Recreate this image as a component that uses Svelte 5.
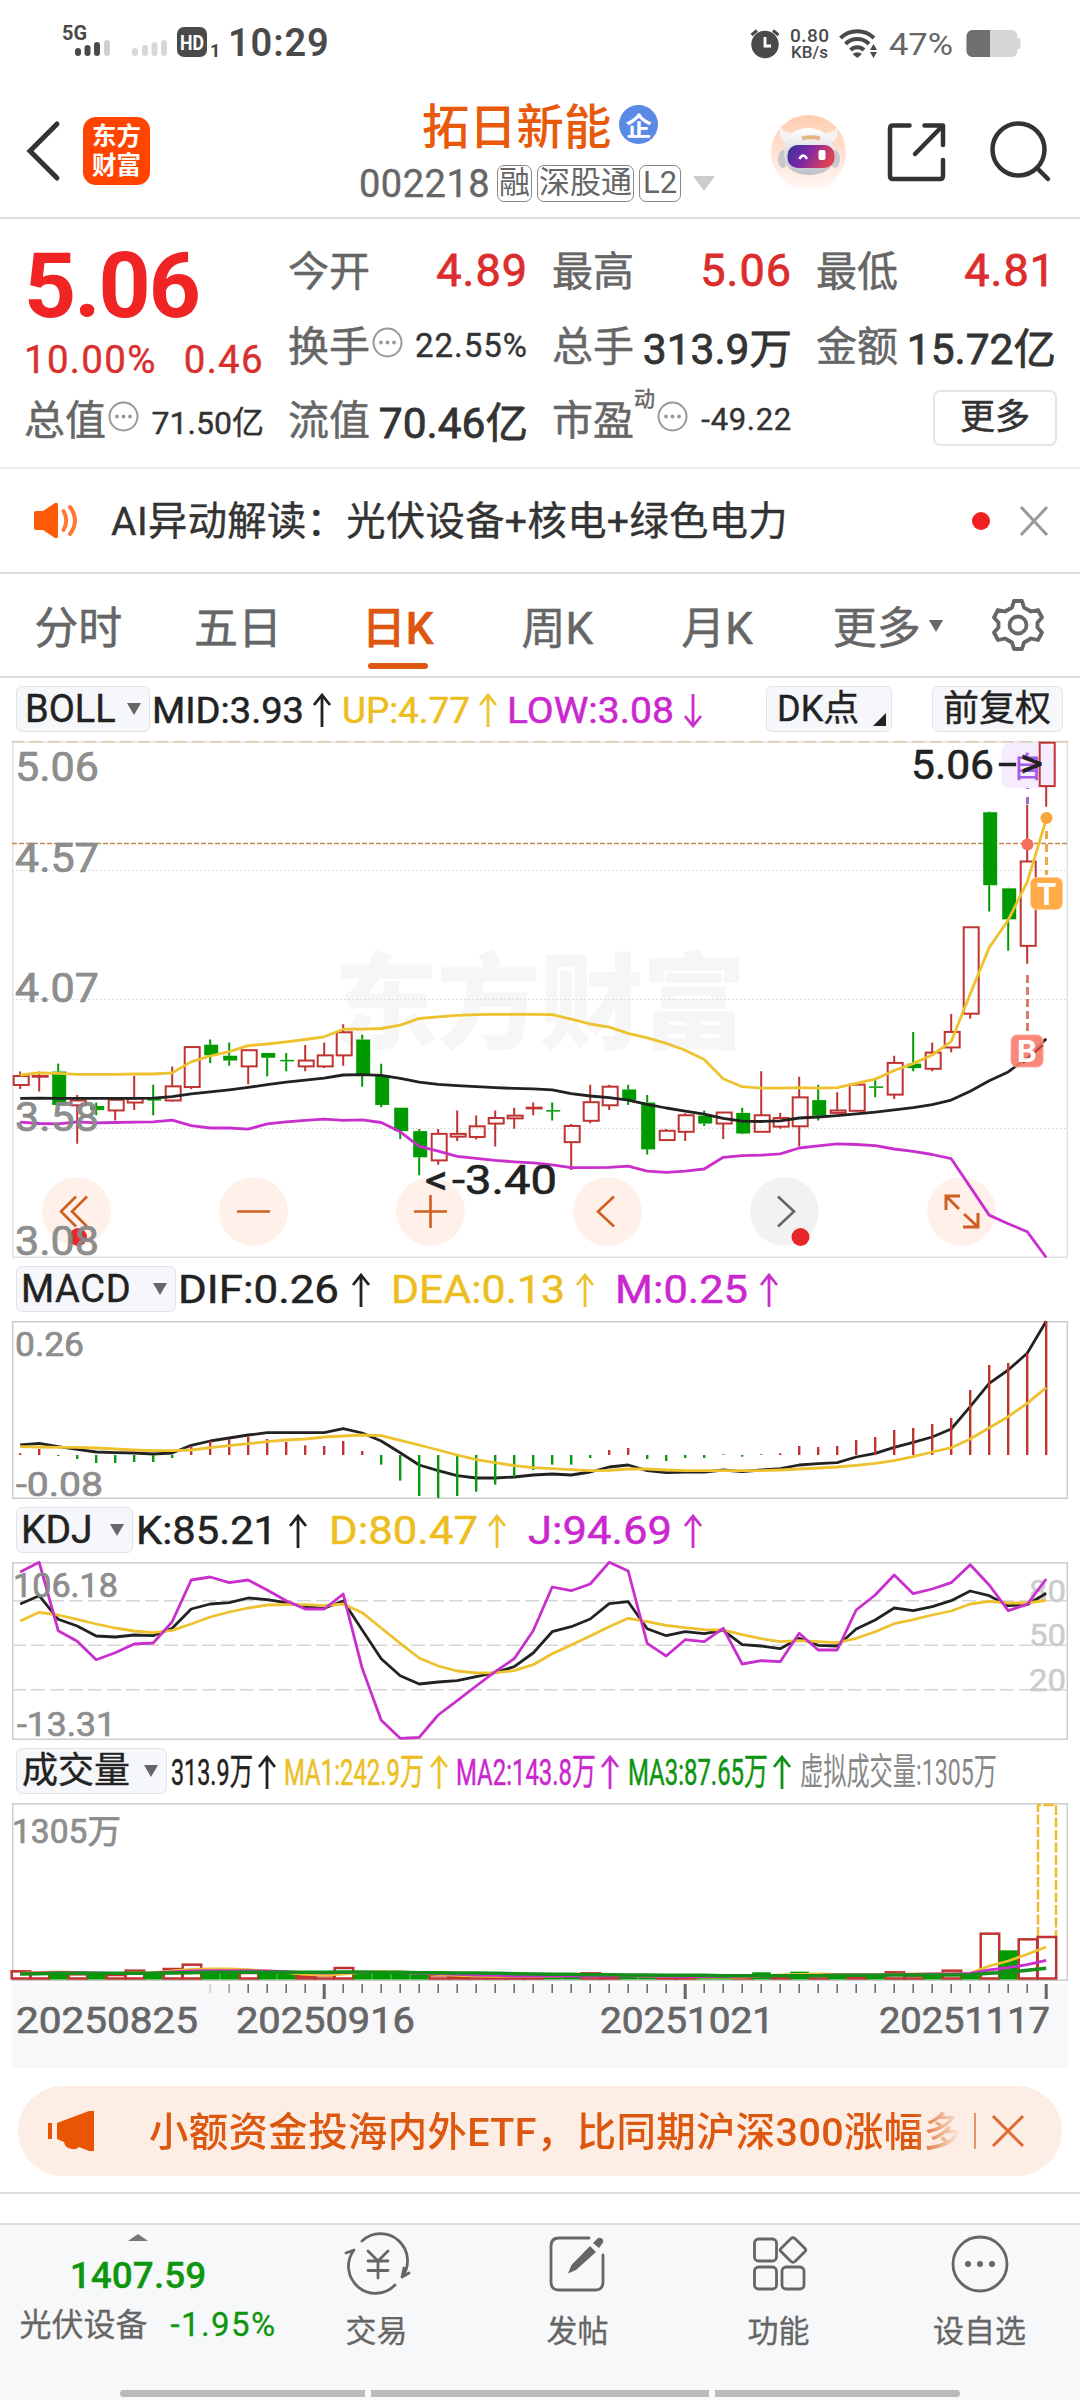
<script>
	const STEP = 19;
	const px = (i) => 8.2 + STEP * i;

	// candle: [body top, body bottom, high, low, rising]
	const candles = [
		[1003, 1029, 990, 1041, 1], [1003, 1005, 990, 1048, 1], [990, 1087, 967, 1087, 0], [1074, 1088, 1058, 1200, 1],
		[1090, 1102, 1080, 1117, 0], [1072, 1103, 1072, 1132, 1], [1068, 1080, 1002, 1102, 1], [1070, 1073, 1028, 1117, 0],
		[1033, 1074, 975, 1078, 1], [919, 1035, 919, 1041, 1], [912, 943, 897, 966, 0], [944, 958, 906, 973, 0],
		[928, 975, 928, 1027, 1], [936, 950, 936, 1004, 0], [956, 960, 936, 989, 0], [958, 975, 913, 989, 1],
		[943, 975, 906, 980, 1], [876, 943, 853, 973, 1], [897, 998, 883, 1034, 0], [1000, 1087, 967, 1094, 0],
		[1095, 1163, 1095, 1186, 0], [1163, 1239, 1157, 1291, 0], [1171, 1248, 1157, 1261, 1], [1171, 1179, 1103, 1192, 1],
		[1149, 1180, 1118, 1187, 1], [1125, 1141, 1103, 1208, 1], [1118, 1126, 1095, 1156, 1], [1095, 1097, 1080, 1117, 1],
		[1102, 1105, 1080, 1132, 0], [1148, 1195, 1142, 1276, 1], [1079, 1133, 1028, 1140, 1], [1034, 1088, 1028, 1102, 1],
		[1042, 1073, 1028, 1087, 0], [1080, 1216, 1058, 1231, 0], [1162, 1189, 1157, 1189, 1], [1117, 1165, 1111, 1192, 1],
		[1118, 1141, 1103, 1148, 0], [1109, 1141, 1109, 1186, 1], [1110, 1170, 1095, 1172, 0], [1117, 1165, 989, 1165, 1],
		[1125, 1150, 1110, 1156, 1], [1065, 1149, 1005, 1208, 1], [1073, 1118, 1028, 1132, 0], [1103, 1110, 1050, 1110, 1],
		[1028, 1104, 1028, 1104, 1], [1033, 1037, 1014, 1065, 0], [965, 1057, 944, 1070, 1], [967, 980, 875, 989, 0],
		[935, 982, 906, 989, 1], [875, 920, 823, 934, 1], [571, 822, 571, 836, 1], [237, 449, 235, 525, 0],
		[458, 548, 456, 639, 0], [380, 625, 215, 677, 1], [35, 161, 35, 221, 1]
	];
	const up = [1000, 994, 995, 998, 998, 998, 997, 997, 994, 962, 945, 932, 915, 910, 904, 897, 889, 867, 867, 865, 855, 836, 831, 827, 825, 824, 824, 824, 825, 838, 852, 861, 879, 892, 908, 928, 955, 1011, 1034, 1038, 1038, 1037, 1038, 1037, 1024, 1012, 987, 967, 942, 903, 765, 630, 550, 440, 258];
	const mid = [1068, 1067, 1068, 1068, 1068, 1068, 1068, 1067, 1063, 1055, 1049, 1043, 1036, 1028, 1021, 1015, 1009, 1000, 999, 1001, 1010, 1021, 1027, 1031, 1034, 1037, 1039, 1040, 1043, 1054, 1061, 1066, 1073, 1085, 1096, 1105, 1114, 1126, 1134, 1135, 1133, 1125, 1122, 1118, 1113, 1108, 1101, 1095, 1086, 1073, 1047, 1017, 991, 950, 895];
	const low = [1137, 1141, 1142, 1136, 1139, 1138, 1137, 1136, 1131, 1147, 1154, 1154, 1157, 1142, 1136, 1132, 1128, 1132, 1130, 1138, 1165, 1207, 1221, 1236, 1242, 1248, 1252, 1255, 1261, 1269, 1269, 1268, 1265, 1279, 1283, 1279, 1273, 1239, 1234, 1233, 1229, 1212, 1206, 1200, 1202, 1205, 1215, 1222, 1231, 1243, 1325, 1407, 1432, 1455, 1530];

	const macdBars = [580, 567, 588, 597, 609, 609, 606, 606, 594, 558, 543, 537, 530, 537, 546, 556, 558, 543, 573, 614, 662, 708, 714, 708, 695, 674, 651, 630, 614, 614, 594, 570, 564, 597, 603, 594, 594, 583, 590, 583, 580, 558, 561, 558, 540, 531, 510, 504, 492, 474, 390, 315, 309, 280, 184];
	const dif = [555, 550, 560, 568, 576, 578, 579, 582, 579, 556, 543, 534, 525, 518, 518, 518, 518, 506, 519, 543, 578, 615, 632, 647, 654, 654, 651, 645, 642, 645, 636, 621, 615, 632, 638, 636, 636, 630, 635, 630, 626, 615, 611, 608, 591, 580, 562, 547, 531, 507, 440, 370, 330, 280, 184];
	const dea = [560, 561, 562, 562, 564, 567, 570, 572, 572, 570, 563, 557, 551, 545, 540, 537, 531, 528, 525, 527, 541, 555, 570, 585, 599, 608, 617, 623, 626, 629, 632, 631, 627, 627, 630, 632, 632, 632, 632, 632, 630, 627, 624, 621, 616, 610, 602, 590, 576, 563, 537, 503, 470, 430, 383];

	const kLine = [162, 137, 208, 228, 258, 261, 255, 257, 235, 177, 162, 158, 144, 149, 158, 170, 175, 153, 240, 326, 377, 402, 396, 392, 380, 368, 350, 309, 245, 230, 207, 161, 155, 236, 257, 245, 251, 241, 284, 288, 296, 265, 286, 288, 237, 210, 174, 182, 170, 152, 123, 137, 167, 164, 130];
	const dLine = [213, 187, 195, 208, 222, 234, 243, 248, 241, 222, 201, 186, 174, 165, 164, 164, 167, 162, 188, 234, 280, 324, 348, 363, 369, 368, 362, 344, 311, 285, 258, 230, 205, 215, 226, 233, 239, 240, 254, 266, 275, 272, 275, 278, 265, 245, 221, 209, 195, 183, 162, 154, 159, 159, 151];
	const jLine = [66, 37, 242, 274, 329, 308, 282, 279, 215, 90, 81, 98, 90, 120, 152, 177, 177, 132, 355, 511, 565, 562, 495, 452, 408, 365, 326, 242, 111, 122, 102, 37, 63, 280, 318, 269, 275, 235, 342, 332, 335, 250, 300, 300, 180, 135, 75, 131, 117, 98, 44, 105, 182, 163, 87];

	const volumes = [694, 698, 697, 703, 703, 705, 692, 700, 687, 674, 694, 694, 699, 700, 702, 708, 706, 684, 695, 697, 700, 703, 706, 708, 710, 710, 710, 710, 711, 711, 700, 711, 711, 711, 710, 710, 711, 711, 711, 697, 708, 695, 705, 709, 709, 708, 697, 707, 707, 692, 708, 581, 631, 598, 591];
	const volUp = '1101011011001001110000111111001100110010101010110101'.split('');
	const volRising = (i) => (i > 50 ? i !== 52 : volUp[i] === '1');
	const volMa = {
		yellow: [700, 697, 696, 697, 700, 701, 699, 698, 693, 688, 687, 687, 689, 693, 698, 703, 705, 702, 697, 695, 696, 699, 703, 706, 708, 709, 709, 709, 708, 707, 706, 706, 707, 708, 709, 710, 711, 711, 711, 708, 705, 703, 702, 703, 704, 704, 703, 702, 702, 701, 700, 678, 663, 643, 621],
		pink: [701, 699, 698, 698, 699, 700, 700, 699, 696, 693, 692, 692, 692, 693, 695, 698, 699, 698, 697, 697, 698, 700, 701, 703, 705, 706, 708, 708, 708, 708, 708, 708, 707, 708, 709, 710, 710, 710, 709, 708, 707, 706, 706, 705, 705, 705, 704, 703, 702, 702, 700, 690, 683, 674, 661],
		green: [702, 701, 700, 700, 700, 700, 700, 700, 699, 698, 697, 697, 697, 697, 697, 697, 697, 696, 696, 697, 697, 698, 698, 699, 699, 700, 701, 702, 703, 703, 704, 704, 705, 705, 706, 706, 706, 707, 707, 707, 707, 707, 707, 706, 706, 706, 705, 705, 705, 705, 704, 700, 697, 691, 685]
	};

	const line = (ys, y) => ys.map((v, i) => `${px(i)},${y(v).toFixed(1)}`).join(' ');
	const py = (v) => (v - 33) / 2.904 + 1;
	const my = (v) => v / 3 - 61;
	const ky = (v) => v / 3 - 12;
	const vy = (v) => v / 3 - 63;

	const readouts = {
		boll: [
			['MID:3.93', 152, 152, 322, 'ink'],
			['UP:4.77', 342, 128, 488, 'yellow'],
			['LOW:3.08', 507, 167, 693, 'pink', true]
		],
		macd: [
			['DIF:0.26', 178, 161, 361, 'ink'],
			['DEA:0.13', 391, 174, 585, 'yellow'],
			['M:0.25', 615, 133, 769, 'pink']
		],
		kdj: [
			['K:85.21', 136, 141, 298, 'ink'],
			['D:80.47', 329, 149, 497, 'yellow'],
			['J:94.69', 528, 144, 693, 'pink']
		],
		vol: [
			['313.9万', 171, 82, 267, 'ink'],
			['MA1:242.9万', 284, 140, 439, 'yellow'],
			['MA2:143.8万', 456, 140, 610, 'pink'],
			['MA3:87.65万', 628, 140, 782, 'green'],
			['虚拟成交量:1305万', 800, 197, 0, 'gray']
		]
	};

	const tabs = ['分时', '五日', '日K', '周K', '月K', '更多'];
	let active = $state('日K');
	const nav = ['交易', '发帖', '功能', '设自选'];
</script>

{#snippet dots()}
	<svg class="info" width="31" height="31" viewBox="0 0 31 31">
		<circle cx="15.5" cy="15.5" r="14" fill="none" stroke="#999" stroke-width="2" />
		<g fill="#999"><circle cx="9" cy="15.5" r="1.9" /><circle cx="15.5" cy="15.5" r="1.9" /><circle cx="22" cy="15.5" r="1.9" /></g>
	</svg>
{/snippet}

{#snippet readout(items, start, end, size)}
	<svg class="readout" width={end - start} height="60" viewBox="{start} 0 {end - start} 60" font-size={size}>
		{#each items as [label, x, w, ax, tone, down]}
			<text class={tone} {x} y="45" textLength={w} lengthAdjust="spacingAndGlyphs">{label}</text>
			{#if ax}
				<path
					class="arrow {tone}"
					d={down ? `M${ax} 16V48M${ax - 8} 38L${ax} 48L${ax + 8} 38` : `M${ax} 49V17M${ax - 8} 27L${ax} 17L${ax + 8} 27`}
				/>
			{/if}
		{/each}
	</svg>
{/snippet}

{#snippet label(text, x, y, w)}
	<text {x} {y} textLength={w} lengthAdjust="spacingAndGlyphs">{text}</text>
{/snippet}

<div class="screen">
	<div class="status">
		<svg width="170" height="40" viewBox="56 22 170 40">
			<text x="62" y="40" font-size="20" font-weight="700" fill="#4a4a4a" textLength="25" lengthAdjust="spacingAndGlyphs">5G</text>
			<g stroke="#4a4a4a" stroke-width="6" stroke-linecap="round">
				<path d="M78 51V53M87.500 48V53M97 45V53" /><path stroke="#d0d0d0" d="M107 43V53" />
				<path stroke="#d8d8d8" d="M135 51V53M145 48V53M154.500 45V53M164 43V53" />
			</g>
			<rect x="177" y="27" width="30" height="30" rx="7" fill="#4a4a4a" />
			<text x="180" y="49.500" font-size="20" font-weight="700" fill="#fff" textLength="24" lengthAdjust="spacingAndGlyphs">HD</text>
			<text x="210" y="57" font-size="18" font-weight="700" fill="#444">1</text>
		</svg>
		<span class="clock">10:29</span>
		<svg class="sys" width="280" height="42" viewBox="745 20 280 42">
			<circle cx="765" cy="43.500" r="13.700" fill="#4a4a4a" />
			<path d="M765 36V45H771" fill="none" stroke="#fff" stroke-width="2.800" />
			<path d="M751.500 34L757 29.500M778.500 34L773 29.500" stroke="#4a4a4a" stroke-width="3" />
			<g fill="#4a4a4a" font-weight="500">
				<text x="790" y="41" font-size="19" textLength="39">0.80</text>
				<text x="791" y="57" font-size="17" textLength="37">KB/s</text>
			</g>
			<g fill="none" stroke="#4a4a4a" stroke-width="4">
				<path d="M840.500 37A24 24 0 0 1 874 37" /><path d="M845.500 43A16.500 16.500 0 0 1 869 43" /><path d="M850.500 49A9.500 9.500 0 0 1 864 49" />
			</g>
			<path d="M857.300 57L852.500 53Q857.300 49.500 862 53ZM873.500 43L870 49H877ZM873.500 57L870 51H877Z" fill="#4a4a4a" />
			<text x="889" y="54" font-size="31" fill="#666" textLength="64" lengthAdjust="spacingAndGlyphs">47%</text>
			<rect x="966.500" y="29" width="51" height="27" rx="6" fill="#d6d6d6" />
			<rect x="1016" y="37" width="4.500" height="11" rx="2" fill="#d6d6d6" />
			<path d="M990 29H972.500A6 6 0 0 0 966.500 35V50A6 6 0 0 0 972.500 56H990Z" fill="#707070" />
		</svg>
	</div>

	<header>
		<svg class="back" width="40" height="64" viewBox="0 0 40 64"><path d="M33 5L6 32L33 59" fill="none" stroke="#333" stroke-width="5" stroke-linecap="round" /></svg>
		<div class="logo"><span>东方</span><span>财富</span></div>
		<div class="title">
			<div class="name"><h1>拓日新能</h1><i>企</i></div>
			<div class="code"><span>002218</span><b>融</b><b>深股通</b><b>L2</b><em></em></div>
		</div>
		<svg class="tools" width="290" height="80" viewBox="765 110 290 80">
			<defs>
				<linearGradient id="halo" x1="0" y1="0" x2="0" y2="1"><stop offset="0" stop-color="#ffccb0" /><stop offset="1" stop-color="#fff8f4" /></linearGradient>
				<linearGradient id="visor" x1="0" y1="0" x2="1" y2="0.3"><stop offset="0" stop-color="#3433a0" /><stop offset="0.5" stop-color="#8028a4" /><stop offset="1" stop-color="#dc4254" /></linearGradient>
				<linearGradient id="shell" x1="0" y1="0" x2="0" y2="1"><stop offset="0" stop-color="#fff" /><stop offset="1" stop-color="#c0c0c8" /></linearGradient>
			</defs>
			<circle cx="808.500" cy="151.500" r="37.500" fill="url(#halo)" />
			<ellipse cx="783" cy="158" rx="5" ry="9" fill="#c8c8d0" /><ellipse cx="835" cy="158" rx="5" ry="9" fill="#c8c8d0" />
			<path d="M790 143Q777 140 780 126Q785 133 797 133ZM828 143Q840 140 837 126Q833 133 820 133Z" fill="#f6f1f2" />
			<path d="M784 155Q783 128 808 127Q834 128 834 155Q834 173 809 174Q785 173 784 155Z" fill="url(#shell)" />
			<path d="M802 137.500Q811 135 820 137.500" stroke="#e5b486" stroke-width="4" fill="none" />
			<rect x="787.500" y="144" width="47" height="23" rx="10" fill="url(#visor)" />
			<path d="M799.500 158Q803 151 807 158" fill="none" stroke="#fff" stroke-width="2.500" />
			<rect x="818.500" y="149" width="7" height="10" rx="2" fill="#fff" />
			<g fill="none" stroke="#333" stroke-width="4.500" stroke-linecap="round" stroke-linejoin="round">
				<path d="M909.500 124.500H893Q890 124.500 890 127.500V175Q890 178 893 178H940Q943 178 943 175V159M924.500 124.500H943V144M942 125.500L915 153" />
				<circle cx="1018.500" cy="148.500" r="26" /><path d="M1037 167L1048 178" />
			</g>
		</svg>
	</header>

	<section class="stats">
		<div class="quote">
			<strong>5.06</strong>
			<div class="change"><span>10.00%</span><span>0.46</span></div>
		</div>
		<div class="cell"><label>今开</label><span class="red">4.89</span></div>
		<div class="cell"><label>最高</label><span class="red">5.06</span></div>
		<div class="cell"><label>最低</label><span class="red">4.81</span></div>
		<div class="cell"><label>换手{@render dots()}</label><span class="s33">22.55%</span></div>
		<div class="cell"><label>总手</label><span>313.9万</span></div>
		<div class="cell"><label>金额</label><span>15.72亿</span></div>
		<div class="cell"><label>总值{@render dots()}</label><span class="s33 tight">71.50亿</span></div>
		<div class="cell"><label>流值</label><span>70.46亿</span></div>
		<div class="cell"><label>市盈<sup>动</sup>{@render dots()}</label><span class="s30">-49.22</span></div>
		<div class="cell end"><button type="button" class="more">更多</button></div>
	</section>

	<section class="notice">
		<svg width="46" height="38" viewBox="0 0 46 38">
			<path d="M1 11Q1 9 3 9H10L22 1Q25 0 25 3V34Q25 37 22 36L10 28H3Q1 28 1 26Z" fill="#ff5a05" />
			<path d="M30.500 9Q36 18.500 30.500 28M37 5Q47 18.500 37 32" fill="none" stroke="#ff7a33" stroke-width="4" stroke-linecap="round" />
		</svg>
		<p>AI异动解读：光伏设备+核电+绿色电力</p>
		<i></i>
		<svg width="32" height="32" viewBox="0 0 32 32"><path d="M3 2L29 30M29 2L3 30" stroke="#999" stroke-width="3" /></svg>
	</section>

	<nav class="tabs">
		{#each tabs as tab}
			<button type="button" class:active={tab === active} onclick={() => (active = tab)}>{tab}{#if tab === '更多'}<em></em>{/if}</button>
		{/each}
		<svg width="54" height="54" viewBox="0 0 54 54" fill="none" stroke="#666" stroke-width="3.800" stroke-linejoin="round">
			<path d="M23 3H31L33 9.500L40 13.500L47 12L51 19.500L46.500 24.500V29.500L51 34.500L47 42L40 40.500L33 44.500L31 51H23L21 44.500L14 40.500L7 42L3 34.500L7.500 29.500V24.500L3 19.500L7 12L14 13.500L21 9.500Z" />
			<circle cx="27" cy="27" r="8.500" />
		</svg>
	</nav>

	<div class="bar">
		<button type="button" class="pill">BOLL<em></em></button>
		{@render readout(readouts.boll, 150, 766, 36.5)}
		<button type="button" class="pill dk">DK点<svg width="13" height="13"><path d="M13 0V13H0Z" fill="#222" /></svg></button>
		<button type="button" class="pill fq">前复权</button>
	</div>

	<svg class="chart" width="1056" height="517" viewBox="0 0 1056 517">
		<text x="322" y="300" font-size="104" font-weight="900" fill="#f6f6f7" textLength="412">东方财富</text>
		<g stroke="#ddd" stroke-dasharray="2 2"><path d="M0 129.500H1056M0 258.500H1056M0 387.500H1056" /></g>
		<rect x="0.750" y="0.750" width="1054.500" height="515.500" fill="none" stroke="#e2e2e4" stroke-width="1.500" />
		<path d="M0 0.700H1056" stroke="#dcc8ac" stroke-width="1.400" stroke-dasharray="12 6" />
		<path d="M0 102.600H1056" stroke="#c08a52" stroke-width="1.500" stroke-dasharray="5 2" />
		<g class="orb">
			<circle cx="64.500" cy="470.500" r="34.300" /><circle cx="241.500" cy="470.500" r="34.300" /><circle cx="418.500" cy="470.500" r="34.300" />
			<circle cx="595.500" cy="470.500" r="34.300" /><circle class="off" cx="772.500" cy="470.500" r="34.300" /><circle cx="949.500" cy="470.500" r="34.300" />
		</g>
		<g fill="none" stroke="#cf5f20" stroke-width="2.600">
			<path d="M64 455.500L49 470.500L64 485.500M75 455.500L60 470.500L75 485.500" />
			<path d="M225 470.500H258M402 470.500H435M418.500 454V487" />
			<path d="M602 455.500L586 470.500L602 485.500" />
			<path stroke="#666" d="M766 455.500L782 470.500L766 485.500" />
			<path stroke-width="3" d="M934 469V455H948M935 456L947 468M966 472V486H951M965 485L952 473" />
		</g>
		<circle cx="66" cy="496" r="9" fill="#e82828" /><circle cx="788.500" cy="496" r="9" fill="#e82828" />
		<rect x="989.500" y="2" width="53" height="45" rx="8" fill="#f5ecff" />
		<text x="1001" y="37" font-size="29" font-weight="500" fill="#a45fe6">自</text>
		<path d="M1015.500 47V74" stroke="#a066dd" stroke-width="3" stroke-dasharray="1 8 7 20" />
		{#each candles as [top, bottom, high, wick, rising], i}
			<g class={rising ? 'rise' : 'fall'}>
				<path d="M{px(i)} {py(high)}V{py(top)}M{px(i)} {py(bottom)}V{py(wick)}" />
				{#if rising}
					<rect x={px(i) - 6.500} y={py(top)} width="15" height={py(bottom) - py(top)} />
				{:else}
					<rect x={px(i) - 6} y={py(top)} width="14" height={Math.max(py(bottom) - py(top), 1.500)} />
				{/if}
			</g>
		{/each}
		<polyline class="ink" points={line(mid, py)} />
		<polyline class="yellow" points={line(up, py)} />
		<polyline class="pink" points={line(low, py)} />
		<g class="peak" font-size="40">
			{@render label('<', 413, 453, 23)}
			{@render label('-3.40', 440, 453, 105)}
			{@render label('5.06', 899, 38, 83)}
			{@render label('-', 986, 36, 19)}
			{@render label('>', 1008, 36, 23)}
		</g>
		<g class="axis" font-size="40">
			{@render label('5.06', 3, 40, 84)}
			{@render label('4.57', 3, 130.5, 84)}
			{@render label('4.07', 3, 261, 84)}
			{@render label('3.58', 3, 390, 84)}
			{@render label('3.08', 3, 514, 84)}
		</g>
		<circle cx="1015.500" cy="103.500" r="6" fill="#f7705e" /><circle cx="1034.500" cy="77" r="6" fill="#f9a53c" />
		<path d="M1034.500 90V134" stroke="#f0a64c" stroke-width="3" stroke-dasharray="8 5" />
		<path d="M1015.500 234V292" stroke="#e07a6b" stroke-width="3" stroke-dasharray="8 4" />
		<rect x="1018.500" y="136.500" width="32" height="32" rx="6" fill="#ffac48" stroke="#ffd09a" />
		<rect x="999" y="294" width="32" height="32" rx="6" fill="#f77e6c" fill-opacity="0.920" stroke="#fba99c" />
		<path d="M1011 322L1031 304" stroke="#b83a2e" stroke-width="2" />
		<g fill="#fff" font-size="31" font-weight="700" text-anchor="middle"><text x="1034.500" y="163.500">T</text><text x="1015" y="321">B</text></g>
	</svg>

	<div class="bar">
		<button type="button" class="pill macd">MACD<em></em></button>
		{@render readout(readouts.macd, 176, 1068, 39)}
	</div>
	<svg class="chart" width="1056" height="178" viewBox="0 0 1056 178">
		<rect x="0.750" y="0.750" width="1054.500" height="176.500" class="frame" />
		<g class="axis" font-size="33">
			{@render label('0.26', 3, 35, 69)}
			{@render label('-0.08', 4, 174.5, 87)}
		</g>
		<polyline class="ink" points={line(dif, my)} />
		{#each macdBars as v, i}
			<path d="M{px(i)} {my(585)}V{my(v)}" stroke={v < 585 ? '#bf3430' : '#0c9a0c'} stroke-width="2.400" />
		{/each}
		<polyline class="yellow" points={line(dea, my)} />
	</svg>

	<div class="bar">
		<button type="button" class="pill kdj">KDJ<em></em></button>
		{@render readout(readouts.kdj, 133, 1068, 39)}
	</div>
	<svg class="chart" width="1056" height="178" viewBox="0 0 1056 178">
		<rect x="0.750" y="0.750" width="1054.500" height="176.500" class="frame" />
		<path d="M0 38.700H1056M0 83.300H1056M0 127.700H1056" stroke="#d6d6d6" stroke-width="1.500" stroke-dasharray="14 5" />
		<g class="level" font-size="32">
			{@render label('80', 1017, 40, 37)}
			{@render label('50', 1017, 84, 37)}
			{@render label('20', 1017, 129, 37)}
		</g>
		<polyline class="ink" points={line(kLine, ky)} />
		<polyline class="yellow" points={line(dLine, ky)} />
		<polyline class="pink" points={line(jLine, ky)} />
		<g class="axis" font-size="33">
			{@render label('106.18', 1, 35, 105)}
			{@render label('-13.31', 5, 174, 99)}
		</g>
	</svg>

	<div class="bar">
		<button type="button" class="pill vol">成交量<em></em></button>
		{@render readout(readouts.vol, 167, 1068, 37)}
	</div>
	<svg class="chart" width="1056" height="178" viewBox="0 0 1056 178">
		<rect x="0.750" y="0.750" width="1054.500" height="176.500" class="frame" />
		<g class="axis" font-size="33">{@render label('1305万', 0, 40, 109)}</g>
		<path d="M1026 134V2H1044V134" fill="none" stroke="#edbd2c" stroke-width="2.500" stroke-dasharray="10 2.500" />
		{#each volumes as v, i}
			{#if volRising(i)}
				<rect x={px(i) - 8.500} y={vy(v)} width="18.500" height={175.500 - vy(v)} fill="#fff" stroke="#bf3430" stroke-width="2.500" />
			{:else}
				<rect x={px(i) - 9} y={vy(v)} width="18.600" height={176.500 - vy(v)} fill="#009b00" />
			{/if}
		{/each}
		<polyline class="yellow" points={line(volMa.yellow, vy)} />
		<polyline class="pink" points={line(volMa.pink, vy)} />
		<polyline class="green" points={line(volMa.green, vy)} />
	</svg>

	<svg class="dates" width="1056" height="84" viewBox="0 0 1056 84">
		{#each { length: 45 } as _, n}
			{@const i = n + 10}
			<path
				d="M{px(i)} 0V{(i - 16) % 19 ? 9 : 15}"
				stroke={i === 10 ? '#ccc' : i === 11 ? '#999' : '#666'}
				stroke-width={(i - 16) % 19 ? 1.500 : 3}
			/>
		{/each}
		<g class="day" font-size="37.500">
			{@render label('20250825', 4, 49, 182)}
			{@render label('20250916', 224, 49, 179)}
			{@render label('20251021', 588, 49, 174)}
			{@render label('20251117', 867, 49, 171)}
		</g>
	</svg>

	<div class="promo">
		<svg width="46" height="40" viewBox="0 0 46 40" fill="#ea5504"><path d="M0 12H4V28H0ZM9 12L41 0H46V40H41L31 36Q28 39 24 38Q17 37 16 31L9 28Z" /></svg>
		<p>小额资金投海内外ETF，比同期沪深300涨幅多</p>
		<i></i>
		<svg width="32" height="34" viewBox="0 0 32 34"><path d="M1 2L31 32M31 2L1 32" stroke="#e0692f" stroke-width="3" /></svg>
	</div>
	<div class="gap"></div>

	<footer>
		<div class="index">
			<em></em>
			<strong>1407.59</strong>
			<div><span>光伏设备</span><b>-1.95%</b></div>
		</div>
		{#each nav as item, n}
			<div class="item">
				<svg width="68" height="60" viewBox="0 0 68 60" fill="none" stroke="#666" stroke-width="2.800" stroke-linecap="round" stroke-linejoin="round">
					{#if n === 0}
						<path d="M19 7A27 27 0 0 1 59 43L66 39M59 43L61 34M52 51A27 27 0 0 1 11 16L3 19" />
						<path d="M25 17L35 27L45 17M35 27V44M25 27H45M25 36.500H45" />
					{:else if n === 1}
						<path d="M45 4H15Q7 4 7 12V48Q7 56 15 56H51Q59 56 59 48V21" />
						<g fill="#666" stroke="none"><path d="M46 12L52 18L32 36L24 39.500L27.500 31ZM49 9L54 4Q57 3 59 5.500Q60 8 58 10L55 14Z" /></g>
					{:else if n === 2}
						<rect x="9.500" y="5" width="22" height="22" rx="4" /><rect x="9.500" y="33" width="22" height="22" rx="4" /><rect x="37" y="33" width="22" height="22" rx="4" />
						<path d="M46 4.500Q48 3 50 4.500L60 14.500Q61.500 16 60 17.500L50 27.500Q48 29 46 27.500L36 17.500Q34.500 16 36 14.500Z" />
					{:else}
						<circle cx="34" cy="30" r="27" />
						<g fill="#666" stroke="none"><circle cx="22" cy="30" r="3" /><circle cx="34" cy="30" r="3" /><circle cx="46" cy="30" r="3" /></g>
					{/if}
				</svg>
				<span>{item}</span>
			</div>
		{/each}
		<div class="home"><i></i><i></i><i></i></div>
	</footer>
</div>

<style>
	:global(body) {
		background: #fff;
	}
	.screen {
		display: flex;
		flex-direction: column;
		width: 1080px;
		height: 2400px;
		overflow: hidden;
		background: #fff;
		color: #333;
		font-family: Roboto, 'Noto Sans CJK SC', sans-serif;
	}
	.screen * {
		box-sizing: border-box;
	}
	button {
		border: 0;
		padding: 0;
		background: none;
		font: inherit;
		color: inherit;
	}
	svg {
		display: block;
		flex: none;
		overflow: visible;
	}
	i,
	em {
		font-style: normal;
	}
	.status {
		display: flex;
		align-items: center;
		height: 84px;
		padding-left: 56px;
	}
	.clock {
		margin: 2px 0 0 2px;
		font-size: 38px;
		font-weight: 600;
		letter-spacing: 0.9px;
		color: #4a4a4a;
	}
	.sys {
		margin-left: auto;
		margin-right: 55px;
	}
	header {
		display: flex;
		align-items: center;
		height: 135px;
		padding-left: 24px;
		border-bottom: 2px solid #dcdcdc;
	}
	.logo {
		display: flex;
		flex-direction: column;
		justify-content: center;
		align-items: center;
		width: 67px;
		height: 68px;
		margin-left: 19px;
		border-radius: 13px;
		background: #ff4400;
		color: #fff;
		font-size: 24.5px;
		font-weight: 700;
		line-height: 29px;
	}
	.title {
		margin: 8px 0 0 209px;
		width: 366px;
	}
	.name {
		display: flex;
		align-items: center;
		height: 58px;
		padding-left: 63px;
	}
	.name h1 {
		margin: -2px 0 0;
		font-size: 47.3px;
		font-weight: 500;
		color: #e8590c;
	}
	.name i {
		display: grid;
		place-items: center;
		width: 39px;
		height: 39px;
		margin-left: 8px;
		border-radius: 50%;
		background: #5b8ae6;
		color: #fff;
		font-size: 26px;
		font-weight: 700;
	}
	.code {
		display: flex;
		align-items: center;
		height: 60px;
		color: #666;
	}
	.code span {
		width: 138px;
		font-size: 38px;
		letter-spacing: 0.5px;
		-webkit-text-stroke: 0.4px;
	}
	.code b {
		height: 37px;
		margin-right: 5px;
		padding: 0 1px;
		border: 1.5px solid #888;
		border-radius: 7px;
		font-size: 31px;
		font-weight: 400;
		line-height: 33px;
	}
	.code b:nth-child(4) {
		padding: 0 3px;
	}
	.code em {
		margin-left: 7px;
		border: 11px solid transparent;
		border-top: 15px solid #ccc;
		border-bottom: 0;
	}
	.tools {
		margin-left: auto;
		margin-right: 25px;
	}
	.stats {
		display: grid;
		grid-template-columns: repeat(4, 238px);
		grid-template-rows: 75px 74px 74px;
		column-gap: 26px;
		height: 250px;
		padding: 14px 26px 0 24px;
		border-bottom: 2px solid #eee;
	}
	.quote {
		grid-row: span 2;
	}
	.quote strong {
		display: block;
		height: 101px;
		font-size: 91px;
		font-weight: 700;
		line-height: 106px;
		letter-spacing: -2px;
		color: #f02424;
	}
	.change {
		display: flex;
		justify-content: space-between;
		margin-right: -2px;
		font-size: 38.5px;
		letter-spacing: 1.3px;
		line-height: 52px;
		color: #d92f2f;
		-webkit-text-stroke: 0.4px;
	}
	.cell {
		display: flex;
		justify-content: space-between;
		align-items: center;
		height: 75px;
		font-size: 42.5px;
		white-space: nowrap;
		-webkit-text-stroke: 0.5px;
	}
	.cell span {
		margin-right: -2px;
		-webkit-text-stroke: 0.8px;
	}
	.cell label {
		display: flex;
		align-items: center;
		margin-top: -6px;
		color: #666;
		font-size: 41px;
	}
	.cell .red {
		font-size: 45px;
		color: #dc2d2d;
		letter-spacing: 1px;
	}
	.cell .s33 {
		font-size: 33px;
		letter-spacing: 1px;
		-webkit-text-stroke: 0.4px;
	}
	.cell .tight {
		font-size: 32px;
		letter-spacing: 0;
	}
	.cell .s30 {
		font-size: 31px;
		letter-spacing: 0.7px;
		-webkit-text-stroke: 0.4px;
	}
	.cell sup {
		align-self: flex-start;
		font-size: 21px;
		line-height: 24px;
	}
	.info {
		margin: 0 0 0 2px;
	}
	.end {
		justify-content: flex-end;
	}
	.more {
		width: 124px;
		height: 56px;
		margin: -4px -3px 0 0;
		border: 2px solid #e6e6e6;
		border-radius: 7px;
		font-size: 35px;
		line-height: 50px;
	}
	.notice {
		display: flex;
		align-items: center;
		height: 105px;
		padding: 0 30px 0 33px;
		border-bottom: 2px solid #dcdcdc;
	}
	.notice p {
		margin: -6px 0 0 32px;
		font-size: 39.3px;
		letter-spacing: 0.35px;
		white-space: nowrap;
		-webkit-text-stroke: 0.4px;
	}
	.notice i {
		width: 18px;
		height: 18px;
		margin: 0 28px 0 auto;
		border-radius: 50%;
		background: #f02020;
	}
	.tabs {
		display: flex;
		align-items: center;
		height: 104px;
		border-bottom: 2px solid #dcdcdc;
	}
	.tabs button {
		position: relative;
		width: 159.7px;
		height: 100%;
		padding: 4px 3px 0 0;
		font-size: 44px;
		line-height: 102px;
		color: #666;
		-webkit-text-stroke: 0.5px;
	}
	.tabs .active {
		color: #dd5710;
		font-weight: 500;
	}
	.tabs .active::after {
		content: '';
		position: absolute;
		left: 49px;
		bottom: 7px;
		width: 60px;
		height: 6px;
		border-radius: 3px;
		background: #dd5710;
	}
	.tabs em {
		position: absolute;
		top: 46px;
		right: 15px;
		border: 7.5px solid transparent;
		border-top: 12px solid #666;
		border-bottom: 0;
	}
	.tabs svg {
		margin-left: 33px;
	}
	.bar {
		display: flex;
		align-items: flex-start;
		height: 63px;
		padding-left: 16px;
	}
	.pill {
		display: flex;
		align-items: center;
		justify-content: space-between;
		width: 134px;
		height: 46px;
		margin-top: 8px;
		padding: 0 8px 0 8px;
		border: 1.5px solid #e2e3e6;
		border-radius: 6px;
		background: #f6f7fa;
		color: #222;
		font-size: 38px;
		line-height: 43px;
		white-space: nowrap;
		-webkit-text-stroke: 0.4px;
	}
	.pill em {
		margin-left: -3px;
		border: 7.5px solid transparent;
		border-top: 12px solid #666;
		border-bottom: 0;
	}
	.macd {
		width: 160px;
		padding-left: 4px;
		letter-spacing: 0.6px;
	}
	.kdj {
		width: 117px;
		padding-left: 4px;
		font-size: 39px;
	}
	.vol {
		width: 151px;
		padding-left: 5px;
		font-size: 36px;
	}
	.bar .dk {
		width: 126px;
		padding: 0 5px 0 10px;
		font-size: 36px;
	}
	.dk svg {
		margin-top: 20px;
	}
	.bar .fq {
		width: 131px;
		margin-left: 40px;
		padding-left: 10px;
		font-size: 36px;
	}
	.chart {
		margin-left: 12px;
	}
	.chart polyline {
		fill: none;
		stroke-width: 2.8;
		stroke-linejoin: round;
	}
	.frame {
		fill: none;
		stroke: #ccc;
		stroke-width: 1.5;
	}
	.axis {
		fill: #888;
		fill-opacity: 0.95;
		stroke: #888;
		stroke-width: 0.7;
	}
	.peak {
		fill: #222;
		stroke: #222;
		stroke-width: 0.6;
	}
	.level {
		fill: #ccc;
		stroke: #ccc;
		stroke-width: 0.5;
	}
	.day {
		fill: #666;
		stroke: #666;
		stroke-width: 0.7;
	}
	polyline.ink,
	.readout .ink {
		stroke: #222;
	}
	polyline.yellow,
	.readout .yellow {
		stroke: #edc22e;
	}
	polyline.pink,
	.readout .pink {
		stroke: #c92fcd;
	}
	polyline.green,
	.readout .green {
		stroke: #12901a;
	}
	.chart polyline.green {
		stroke-width: 3.5;
	}
	.readout text {
		stroke-width: 0.5;
	}
	.readout .arrow {
		fill: none;
		stroke-width: 2.8;
	}
	text.ink {
		fill: #222;
	}
	text.yellow {
		fill: #edbd1c;
	}
	text.pink {
		fill: #cb26d0;
	}
	text.green {
		fill: #0d960d;
	}
	text.gray {
		fill: #888;
	}
	.rise {
		fill: none;
		stroke: #bf3430;
		stroke-width: 2;
	}
	.fall path {
		stroke: #009b00;
		stroke-width: 2;
	}
	.fall rect {
		fill: #009b00;
	}
	.orb circle {
		fill: #fff0e9;
	}
	.orb .off {
		fill: #f2f2f2;
	}
	.dates {
		margin: 3px 0 0 12px;
		background: #f8f8fa;
	}
	.promo {
		display: flex;
		align-items: center;
		flex: none;
		width: 1044px;
		height: 90px;
		margin: 18px 0 0 18px;
		padding-left: 30px;
		border-radius: 45px;
		background: #fdeee5;
	}
	.promo p {
		width: 809px;
		margin: -5px 0 0 55px;
		overflow: hidden;
		font-size: 39.4px;
		letter-spacing: 0.4px;
		font-weight: 500;
		white-space: nowrap;
		color: #dc5810;
		-webkit-mask: linear-gradient(90deg, #000 765px, transparent 812px);
		mask: linear-gradient(90deg, #000 765px, transparent 812px);
	}
	.promo i {
		width: 2px;
		height: 36px;
		margin: 0 16px;
		background: #e3946c;
	}
	.gap {
		height: 33px;
		margin-top: 16px;
		border-top: 2px solid #dcdcdc;
		border-bottom: 2px solid #dcdcdc;
	}
	footer {
		position: relative;
		display: flex;
		flex: 1;
		background: #f7f8fa;
		color: #666;
		-webkit-text-stroke: 0.3px;
	}
	.index {
		display: flex;
		flex-direction: column;
		align-items: center;
		width: 276px;
		padding-top: 9px;
	}
	.index em {
		border: 10.5px solid transparent;
		border-bottom: 7px solid #777;
		border-top: 0;
	}
	.index strong {
		margin-top: 12px;
		font-size: 37px;
		font-weight: 500;
		line-height: 46px;
		color: #0f960f;
	}
	.index div {
		display: flex;
		justify-content: space-between;
		width: 257px;
		margin: 2px 0 0 20px;
		font-size: 32px;
		line-height: 48px;
		white-space: nowrap;
	}
	.index b {
		font-weight: 400;
		font-size: 33px;
		letter-spacing: 1.4px;
		color: #0f960f;
	}
	.item {
		display: flex;
		flex-direction: column;
		align-items: center;
		width: 201px;
		padding-top: 9px;
		font-size: 31px;
	}
	.item span {
		margin-top: 15px;
		line-height: 46px;
	}
	.home {
		position: absolute;
		left: 120px;
		bottom: 3px;
		display: flex;
		gap: 6px;
	}
	.home i {
		width: 245px;
		height: 7px;
		background: #bbb;
	}
	.home i:first-child {
		border-radius: 4px 0 0 4px;
	}
	.home i:nth-child(2) {
		width: 338px;
	}
	.home i:last-child {
		border-radius: 0 4px 4px 0;
	}
</style>
